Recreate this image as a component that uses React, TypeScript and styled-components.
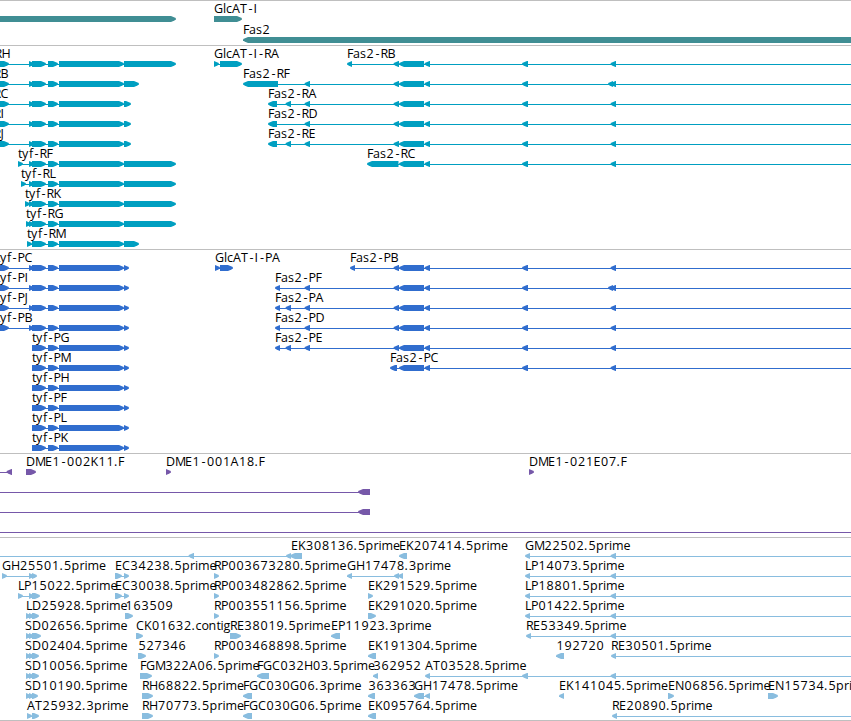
import styled, { createGlobalStyle } from "styled-components"

const Black = "#000000"
const White = "#ffffff"
const Border = "#bfbfbf"
const GeneColor = "#408e94"
const RnaColor = "#009fc1"
const ProteinColor = "#306dce"
const CloneColor = "#7658a9"
const EstColor = "#89bddf"

const VIEW_WIDTH = 851
const HEAD = 5

const GlobalStyle = createGlobalStyle`
    body {
        margin: 0;
        background-color: ${White};
        overflow: hidden;
    }
`

const Browser = styled.main`
    width: ${VIEW_WIDTH}px;
    height: 721px;
    display: flex;
    flex-direction: column;
    box-sizing: border-box;
    border-bottom: 1px solid ${Border};
    overflow: hidden;
`

const TrackStyled = styled.section<{ $color: string; $gap: number; $last: boolean }>`
    display: flex;
    flex-direction: column;
    flex-shrink: 0;
    gap: ${({ $gap }) => $gap}px;
    padding: 1px 0 ${({ $last }) => ($last ? 1 : 2)}px;
    border-top: 1px solid ${Border};
    color: ${({ $color }) => $color};
`

const LaneStyled = styled.svg`
    display: block;
    width: 100%;
    height: 20px;
    fill: currentColor;
    overflow: visible;
`

const Label = styled.text`
    fill: ${Black};
    font-family: "Open Sans", "DejaVu Sans", sans-serif;
    font-size: 12.5px;
    font-kerning: none;
    font-variant-ligatures: none;
`

type Exon = [number, number]

interface Feature {
    name?: string
    labelX?: number
    dir: 1 | -1
    exons: Exon[]
    line?: Exon
}

interface TrackData {
    id: string
    color: string
    gap?: number
    lanes: Feature[][]
}

const fwd = (name: string, exons: Exon[], labelX?: number): Feature => ({ name, dir: 1, exons, labelX })
const rev = (name: string, exons: Exon[], labelX?: number): Feature => ({ name, dir: -1, exons, labelX })
const revLong = (name: string, exons: Exon[]): Feature => ({ name, dir: -1, exons, line: [exons[0][0] + 2, VIEW_WIDTH] })

const tyfCore: Exon[] = [[32, 46], [48, 58], [59, 124]]
const tyf = (suffix: string, start: Exon[], end: number, labelX?: number) =>
    fwd(`tyf-${suffix}`, [...start, ...tyfCore, [124, end]], labelX)

const fas2Core: Exon[] = [[399, 424], [424.5, 430], [522, 528]]
const fas2 = (suffix: string, start: Exon[], extra = false) =>
    revLong(`Fas2-${suffix}`, [...start, ...fas2Core, ...(extra ? [[608, 613] as Exon] : []), [610.5, 616]])

const small: Exon = [29, 34]
const left: Exon = [-6, 9]
const joint: Exon = [393.5, 399]

const tracks: TrackData[] = [
    {
        id: "genes",
        color: GeneColor,
        gap: 1,
        lanes: [
            [{ dir: 1, exons: [[-20, 176]] }, fwd("GlcAT-I", [[214, 242]])],
            [rev("Fas2", [[243, 870]])],
        ],
    },
    {
        id: "transcripts",
        color: RnaColor,
        lanes: [
            [tyf("RH", [left, small], 176, -27), fwd("GlcAT-I-RA", [[214, 219], [220, 242]]), fas2("RB", [[347, 352], joint])],
            [tyf("RB", [left, small], 139, -28), fas2("RF", [[243, 278], [304.5, 310], joint], true)],
            [tyf("RC", [left, small], 131, -28), fas2("RA", [[268, 277], [285.5, 291], [304.5, 310], joint])],
            [tyf("RI", [left, small], 131, -28), fas2("RD", [[268, 277], [304.5, 310], joint])],
            [tyf("RJ", [left, small], 131, -28), fas2("RE", [[268, 277], [285.5, 291], [304.5, 310], joint])],
            [tyf("RF", [[18, 23], small], 176), fas2("RC", [[367, 398.5]])],
            [tyf("RL", [[21, 26], small], 176)],
            [tyf("RK", [[25, 30], small], 176)],
            [tyf("RG", [[26, 31], small], 176)],
            [tyf("RM", [[27, 32]], 139)],
        ],
    },
    {
        id: "proteins",
        color: ProteinColor,
        lanes: [
            [tyf("PC", [left, small], 129, -4), fwd("GlcAT-I-PA", [[215, 220], [220, 233]]), fas2("PB", [[350, 355], joint])],
            [tyf("PI", [left, small], 129, -4), fas2("PF", [[275, 280], [304.5, 310], joint], true)],
            [tyf("PJ", [left, small], 129, -4), fas2("PA", [[275, 280], [285.5, 291], [304.5, 310], joint])],
            [tyf("PB", [left, small], 129, -4), fas2("PD", [[275, 280], [304.5, 310], joint])],
            [tyf("PG", [], 129), fas2("PE", [[275, 280], [285.5, 291], [304.5, 310], joint])],
            [tyf("PM", [], 129), fas2("PC", [[390, 397]])],
            [tyf("PH", [], 129)],
            [tyf("PF", [], 129)],
            [tyf("PL", [], 129)],
            [tyf("PK", [], 129)],
        ],
    },
    {
        id: "clones",
        color: CloneColor,
        lanes: [
            [
                { dir: -1, exons: [[6.5, 12]], line: [0, 9] },
                fwd("DME1-002K11.F", [[26, 36]]),
                fwd("DME1-001A18.F", [[166, 171]]),
                fwd("DME1-021E07.F", [[529, 534]]),
            ],
            [{ dir: -1, exons: [[358, 370]], line: [0, 362] }],
            [{ dir: -1, exons: [[358, 370]], line: [0, 362] }],
            [{ dir: -1, exons: [], line: [0, VIEW_WIDTH] }],
        ],
    },
    {
        id: "ests",
        color: EstColor,
        lanes: [
            [
                { name: "EK308136.5prime", labelX: 291, dir: -1, exons: [[188.5, 194], [286, 291], [290, 302]], line: [0, 292] },
                rev("EK207414.5prime", [[399, 407]]),
                revLong("GM22502.5prime", [[525, 530], [610.5, 616]]),
            ],
            [
                fwd("GH25501.5prime", [[2, 7], small, [32, 37]]),
                fwd("EC34238.5prime", [[115, 122], [124, 129]]),
                fwd("RP003673280.5prime", [[214, 219]]),
                rev("GH17478.3prime", [[347, 352], [394, 399], [398, 403]]),
                revLong("LP14073.5prime", [[525, 530], [610.5, 616]]),
            ],
            [
                fwd("LP15022.5prime", [[18, 23], small, [32, 40]]),
                fwd("EC30038.5prime", [[115, 122], [124, 129]]),
                fwd("RP003482862.5prime", [[214, 219]]),
                fwd("EK291529.5prime", [[368, 373]]),
                revLong("LP18801.5prime", [[525, 530], [610.5, 616]]),
            ],
            [
                fwd("LD25928.5prime", [[26, 31], small, [32, 39]]),
                fwd("163509", [[125, 133]]),
                fwd("RP003551156.5prime", [[214, 219]]),
                fwd("EK291020.5prime", [[368, 376]]),
                revLong("LP01422.5prime", [[525, 530], [610.5, 616]]),
            ],
            [
                fwd("SD02656.5prime", [[26, 31], small, [32, 41]], 25),
                fwd("CK01632.contig", [[136, 143]]),
                fwd("RE38019.5prime", [[230, 241]]),
                rev("EP11923.3prime", [[331, 340]]),
                revLong("RE53349.5prime", [[526, 531], [610.5, 616]]),
            ],
            [
                fwd("SD02404.5prime", [[26, 31], small, [32, 39]], 25),
                fwd("527346", [[138, 146]]),
                fwd("RP003468898.5prime", [[214, 219]]),
                rev("EK191304.5prime", [[368, 376]]),
                rev("192720", [[556, 564]]),
                revLong("RE30501.5prime", [[611, 616]]),
            ],
            [
                fwd("SD10056.5prime", [[26, 31], small, [32, 39]], 25),
                fwd("FGM322A06.5prime", [[140, 152]]),
                rev("FGC032H03.5prime", [[257, 269]]),
                rev("362952", [[373, 378]]),
                revLong("AT03528.5prime", [[425, 430], [522, 528], [610.5, 616]]),
            ],
            [
                fwd("SD10190.5prime", [[26, 31], small, [32, 38]], 25),
                fwd("RH68822.5prime", [[142, 153]]),
                rev("FGC030G06.3prime", [[243, 252]]),
                rev("363363", [[368, 375]]),
                rev("GH17478.5prime", [[414, 424], [425, 430]]),
                rev("EK141045.5prime", [[559, 564]]),
                fwd("EN06856.5prime", [[668, 674]]),
                fwd("EN15734.5prime", [[768, 778]]),
            ],
            [
                fwd("AT25932.3prime", [[27, 32], [32, 39]]),
                fwd("RH70773.5prime", [[142, 153]]),
                rev("FGC030G06.5prime", [[243, 252]]),
                rev("EK095764.5prime", [[368, 376]]),
                revLong("RE20890.5prime", [[612, 617]]),
            ],
        ],
    },
]

// digits and anything not listed take 8
const advances: Record<string, number> = {
    A: 8, B: 7, C: 8, D: 9, E: 7, F: 6, G: 9, H: 8.5, I: 4, J: 4, K: 7.5, L: 6, M: 10, N: 9, P: 7, R: 7, S: 7, T: 7,
    a: 7, c: 6, e: 7, f: 4, g: 8, i: 3, l: 3, m: 11.5, n: 8, o: 7, p: 8, r: 5, s: 6, t: 4, y: 7,
    "-": 6.5, ".": 4,
}

const glyphPositions = (text: string, start: number) => {
    let x = start
    return text.split("").map(char => {
        // the hyphen and the digits sit in the middle of their cell
        const shift = char === "-" ? 1.5 : /\d/.test(char) ? 0.5 : 0
        const position = x + shift
        x += advances[char] ?? 8
        return position
    }).join(" ")
}

// box between y 14 and 20 with a rounded point on the strand side
const exonPath = ([start, end]: Exon, dir: 1 | -1) => {
    const [tail, tip] = dir === 1 ? [start, end] : [end, start]
    const neck = tip - dir * Math.min(HEAD, end - start)
    const cheek = tip - dir * 2
    return `M${tail} 14H${neck}L${cheek} 15.3L${tip} 16.5V17.5L${cheek} 18.7L${neck} 20H${tail}Z`
}

const FeatureGlyph = ({ feature }: { feature: Feature }) => {
    const { exons, dir } = feature
    const line = feature.line ?? [exons[0][0], exons[exons.length - 1][1] - 2]
    return (
        <g>
            <rect x={line[0]} y={17} width={line[1] - line[0]} height={1} />
            {exons.map((exon, index) => <path key={index} d={exonPath(exon, dir)} />)}
        </g>
    )
}

const Lane = ({ features }: { features: Feature[] }) => (
    <LaneStyled>
        {features.map((feature, index) => <FeatureGlyph key={index} feature={feature} />)}
        {features.map(({ name, labelX, exons }) => name && (
            <Label key={name} x={glyphPositions(name, labelX ?? exons[0][0])} y={11}>{name}</Label>
        ))}
    </LaneStyled>
)

const App = () => {
    return (
        <>
            <GlobalStyle />
            <Browser>
                {tracks.map(({ id, color, gap, lanes }, index) => (
                    <TrackStyled key={id} $color={color} $gap={gap ?? 0} $last={index === tracks.length - 1}>
                        {lanes.map((features, lane) => <Lane key={lane} features={features} />)}
                    </TrackStyled>
                ))}
            </Browser>
        </>
    )
}

export default App
